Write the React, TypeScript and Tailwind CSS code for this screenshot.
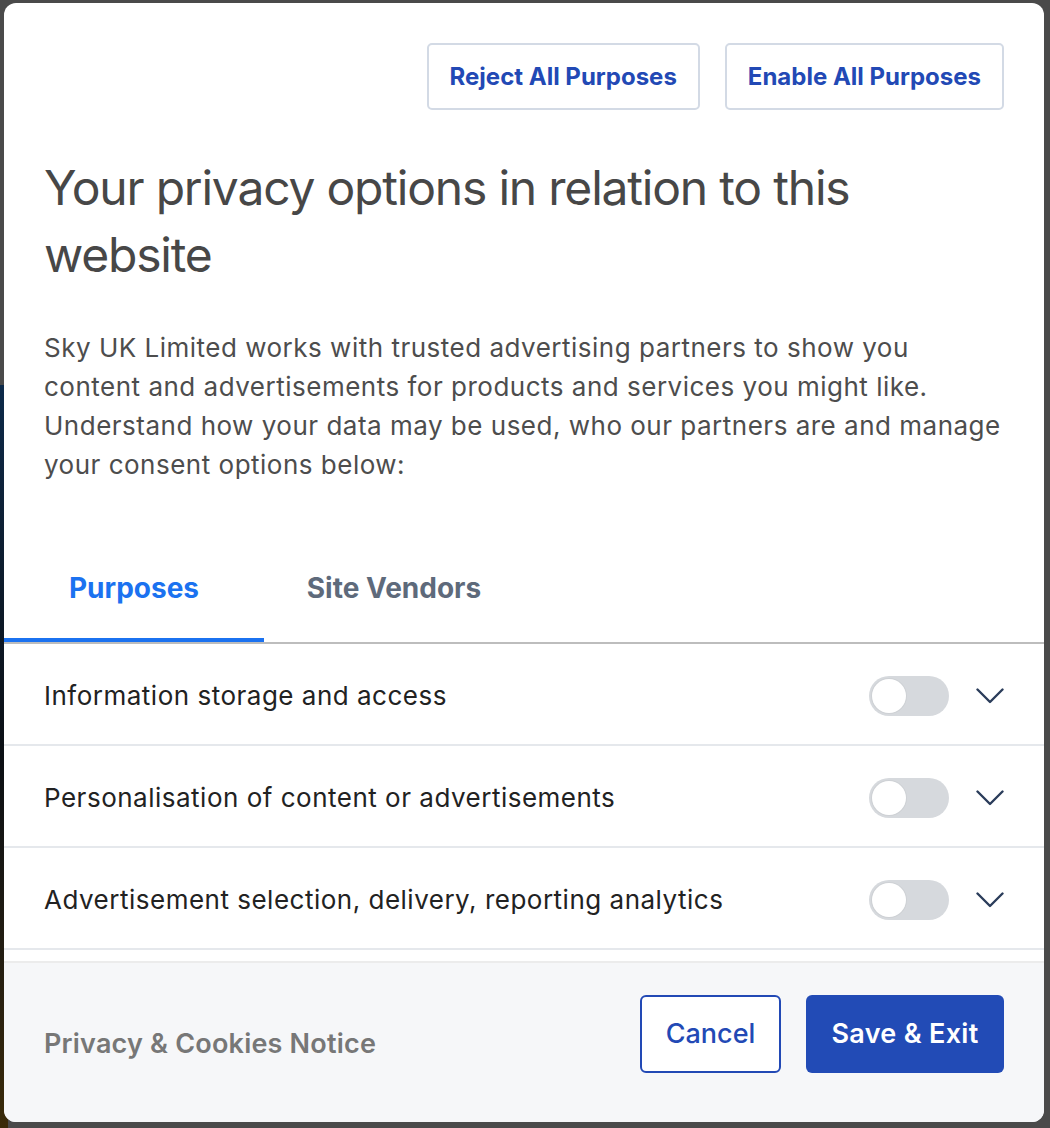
import { useState } from "react";

const purposes = [
  "Information storage and access",
  "Personalisation of content or advertisements",
  "Advertisement selection, delivery, reporting analytics",
];

function Toggle() {
  return (
    <div className="w-[80px] h-[40px] rounded-full bg-[#d6d9dd] p-[3px] flex items-center">
      <div className="w-[34px] h-[34px] rounded-full bg-white shadow-[0_0_0_1px_rgba(0,0,0,0.04)]" />
    </div>
  );
}

function Chevron() {
  return (
    <svg width="28" height="16" viewBox="0 0 28 16" fill="none">
      <path d="M1.5 1.5 L14 14 L26.5 1.5" stroke="#2b3d5b" strokeWidth="2.4" strokeLinecap="round" strokeLinejoin="round" />
    </svg>
  );
}

export default function App() {
  const [tab, setTab] = useState("purposes");

  return (
    <div className="relative w-[1050px] h-[1128px] bg-[#4a4a4a] overflow-hidden" style={{ fontFamily: "Inter, 'Noto Sans', sans-serif" }}>
      {/* page behind the dialog */}
      <div className="absolute left-0 top-[385px] w-[8px] h-[743px] bg-gradient-to-b from-[#0d2a4a] via-[#0b0f14] to-[#3a2a08]" />

      <div className="relative ml-[4px] mt-[3px] w-[1040px] h-[1119px] rounded-[12px] bg-white overflow-hidden flex flex-col">
        {/* Header */}
        <div className="px-[40px] pt-[40px]">
          <div className="flex justify-end gap-[25px]">
            <button className="h-[67px] px-[21px] rounded-[5px] border-2 border-[#d3dae5] text-[#2249b5] text-[24px] font-bold">
              Reject All Purposes
            </button>
            <button className="h-[67px] px-[21px] rounded-[5px] border-2 border-[#d3dae5] text-[#2249b5] text-[24px] font-bold">
              Enable All Purposes
            </button>
          </div>

          <h1 className="mt-[44px] text-[48px] leading-[67px] text-[#474747] font-normal tracking-[-1.2px]">
            Your privacy options in relation to this
            <br />
            website
          </h1>

          <p className="mt-[40px] text-[26px] leading-[39px] text-[#4d4d4d] tracking-[0.5px] whitespace-nowrap">
            Sky UK Limited works with trusted advertising partners to show you
            <br />
            content and advertisements for products and services you might like.
            <br />
            Understand how your data may be used, who our partners are and manage
            <br />
            your consent options below:
          </p>
        </div>

        {/* Tabs */}
        <div className="mt-[54px] flex border-b-2 border-[#bdbdbd]">
          <button
            onClick={() => setTab("purposes")}
            className={`w-[260px] h-[104px] flex items-center justify-center text-[28px] font-bold border-b-4 ${
              tab === "purposes" ? "text-[#1b72f0] border-[#1b72f0]" : "text-[#5e6a7b] border-transparent"
            }`}
          >
            Purposes
          </button>
          <button
            onClick={() => setTab("vendors")}
            className={`w-[260px] h-[104px] flex items-center justify-center text-[28px] font-bold border-b-4 ${
              tab === "vendors" ? "text-[#1b72f0] border-[#1b72f0]" : "text-[#5e6a7b] border-transparent"
            }`}
          >
            Site Vendors
          </button>
        </div>

        {/* Purpose list */}
        <div className="h-[317px] overflow-hidden">
          {purposes.map((p) => (
            <div key={p} className="h-[102px] px-[40px] pt-[3px] flex items-center justify-between border-b-2 border-[#e5e8ec]">
              <span className="text-[26px] text-[#222] tracking-[0.5px]">{p}</span>
              <div className="flex items-center gap-[27px]">
                <Toggle />
                <Chevron />
              </div>
            </div>
          ))}
        </div>

        {/* Footer */}
        <div className="flex-1 bg-[#f6f7f9] border-t-2 border-[#ececec] px-[40px] pt-[32px] flex justify-between items-start">
          <a className="mt-[29px] text-[27px] font-semibold text-[#777] tracking-[0.2px]">Privacy &amp; Cookies Notice</a>
          <div className="flex gap-[25px]">
            <button className="h-[78px] w-[141px] rounded-[6px] border-2 border-[#2249b5] bg-white text-[#2249b5] text-[27px] font-medium">
              Cancel
            </button>
            <button className="h-[78px] w-[198px] rounded-[6px] bg-[#224bb6] text-white text-[27px] font-semibold tracking-[0.3px]">
              Save &amp; Exit
            </button>
          </div>
        </div>
      </div>
    </div>
  );
}
